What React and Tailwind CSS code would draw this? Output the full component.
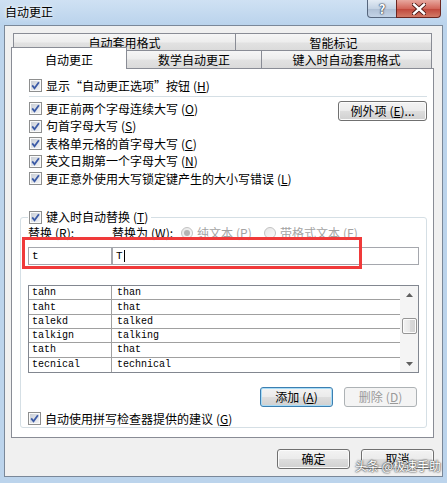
const ui = "font-['Noto_Sans_CJK_SC',sans-serif]";
const mono = "font-['Liberation_Mono',monospace]";
const tabBg = 'bg-[linear-gradient(to_bottom,#f6f6f6,#ededed_48%,#e2e2e2_52%,#dadada)]';
const btnBg = 'bg-[linear-gradient(to_bottom,#f3f3f3,#ebebeb_48%,#dddddd_52%,#d0d0d0)]';

const rows = [
  ['tahn', 'than'],
  ['taht', 'that'],
  ['talekd', 'talked'],
  ['talkign', 'talking'],
  ['tath', 'that'],
  ['tecnical', 'technical'],
];

function Check() {
  return (
    <span className="flex h-[13px] w-[13px] shrink-0 items-center justify-center border border-[#8e8f8f] bg-[#f4f4f4]">
      <span className="flex h-[11px] w-[11px] items-center justify-center border border-[#fafafa] bg-[linear-gradient(135deg,#c9ced6,#f3f4f6)]">
        <svg width="9" height="9" viewBox="0 0 9 9">
          <path d="M1.2 4.4 3.5 7.2 7.9 1.2" fill="none" stroke="#3b5aa6" strokeWidth="1.8" />
        </svg>
      </span>
    </span>
  );
}

function Radio({ on }) {
  return (
    <span className="flex h-[12px] w-[12px] shrink-0 items-center justify-center rounded-full border border-[#c2c2c2] bg-[linear-gradient(135deg,#e6e6e6,#fafafa)]">
      {on && <span className="h-[6px] w-[6px] rounded-full bg-[#b4b4b4]" />}
    </span>
  );
}

function Key({ k }) {
  return (
    <span className="ml-[3px]">
      (<span className="underline underline-offset-1">{k}</span>)
    </span>
  );
}

function CheckRow({ label, k }) {
  return (
    <div className="flex h-[17.5px] items-center gap-[4px]">
      <Check />
      <span className="whitespace-nowrap leading-[14px]">
        {label}
        <Key k={k} />
      </span>
    </div>
  );
}

function Btn({ children, kind = 'normal', className = '' }) {
  const look = {
    normal: `border-[#707070] ${btnBg} shadow-[inset_0_0_0_1px_#fbfbfb] text-black`,
    focus: `border-[#3c7fb1] ${btnBg} shadow-[inset_0_0_0_1px_#a8dcf7] text-black`,
    off: 'border-[#adb2b5] bg-[#f4f4f4] text-[#9a9a9a]',
  }[kind];
  return (
    <div className={`flex items-center justify-center rounded-[3px] border leading-[14px] ${look} ${className}`}>
      {children}
    </div>
  );
}

function Tab({ children, className = '' }) {
  return (
    <div className={`flex items-center justify-center border border-b-0 border-[#898c95] ${tabBg} leading-[14px] ${className}`}>
      {children}
    </div>
  );
}

export default function App() {
  return (
    <div className={`relative flex h-[483px] w-[447px] flex-col overflow-hidden bg-[#bcd4ec] text-[12px] text-black ${ui}`}>
      {/* title bar */}
      <div className="flex h-[25px] items-start justify-between bg-[linear-gradient(to_bottom,#cfe1f3,#bad3ec)]">
        <span className="pl-[5px] pt-[5px] leading-[14px] [text-shadow:0_0_6px_#ffffff,0_0_3px_#ffffff]">自动更正</span>
        <div className="mr-[6px] flex h-[18px]">
          <div className="flex w-[30px] items-center justify-center rounded-bl-[4px] border border-t-0 border-[#56667d] bg-[linear-gradient(to_bottom,#e3ebf4,#c4d3e4_50%,#aebfd4_52%,#c3d3e6)] text-[13px] font-bold leading-none text-white [text-shadow:0_0_1px_#2c3a4e,0_0_1px_#2c3a4e,0_0_2px_#2c3a4e]">
            ?
          </div>
          <div className="-ml-px flex w-[45px] items-center justify-center rounded-br-[4px] border border-t-0 border-[#6b2620] bg-[linear-gradient(to_bottom,#e8a89f,#d2665a_50%,#c0463a_52%,#d27a66)]">
            <svg width="14" height="12" viewBox="0 0 14 12">
              <path d="M2 1.5 12 10.5M12 1.5 2 10.5" stroke="#4a1612" strokeWidth="4.2" strokeLinecap="square" />
              <path d="M2 1.5 12 10.5M12 1.5 2 10.5" stroke="#ffffff" strokeWidth="2.4" strokeLinecap="square" />
            </svg>
          </div>
        </div>
      </div>

      {/* client area */}
      <div className="mx-[4px] mb-[6px] flex flex-1 flex-col border border-[#7a8899] bg-[#f0f0f0] pl-[6px] pr-[8px] pt-[7px]">
        {/* tabs */}
        <div className="mx-[2px] flex h-[18px]">
          <Tab className="w-[223px]">自动套用格式</Tab>
          <Tab className="-ml-px flex-1">智能标记</Tab>
        </div>
        <div className="-mt-px flex h-[18px] items-end">
          <div className="relative z-10 -mb-px flex h-[22px] w-[116px] items-center justify-center border border-b-0 border-[#898c95] bg-white pt-[3px] leading-[14px]">
            自动更正
          </div>
          <Tab className="-ml-px h-[18px] w-[136px]">数学自动更正</Tab>
          <Tab className="-ml-px mr-[2px] h-[18px] flex-1">键入时自动套用格式</Tab>
        </div>

        {/* panel */}
        <div className="flex flex-col border border-[#898c95] bg-white pb-[9px] pt-[8px]">
          <div className="ml-[17px] mr-[6px]">
            <div className="flex h-[17px] items-center gap-[4px]">
              <Check />
              <span className="leading-[14px]">
                显示“自动更正选项”按钮
                <Key k="H" />
              </span>
            </div>
            <div className="mt-[2px] h-px bg-[#d5dfe5]" />
            <div className="mt-[3px] flex justify-between">
              <div className="flex flex-col">
                <CheckRow label="更正前两个字母连续大写" k="O" />
                <CheckRow label="句首字母大写" k="S" />
                <CheckRow label="表格单元格的首字母大写" k="C" />
                <CheckRow label="英文日期第一个字母大写" k="N" />
                <CheckRow label="更正意外使用大写锁定键产生的大小写错误" k="L" />
              </div>
              <Btn className="mt-[1px] h-[20px] w-[89px]">
                例外项<Key k="E" />...
              </Btn>
            </div>
          </div>

          <fieldset className="ml-[8px] mr-[6px] mt-[21px] rounded-[3px] border border-[#d5dfe5] px-[7px]">
            <legend className="pl-[1px] pr-[3px]">
              <div className="flex h-[17px] items-center gap-[4px]">
                <Check />
                <span className="leading-[14px]">
                  键入时自动替换
                  <Key k="T" />
                </span>
              </div>
            </legend>

            <div className="flex h-[14px] items-center leading-[14px]">
              <span className="w-[84px]">
                替换<Key k="R" />:
              </span>
              <span className="w-[69px]">
                替换为<Key k="W" />:
              </span>
              <div className="flex w-[83px] items-center gap-[4px] text-[#a3a3a3]">
                <Radio on />
                <span>
                  纯文本<Key k="P" />
                </span>
              </div>
              <div className="flex items-center gap-[4px] text-[#a3a3a3]">
                <Radio />
                <span>
                  带格式文本<Key k="F" />
                </span>
              </div>
            </div>

            <div className={`mt-[7.5px] flex h-[18px] text-[11px] ${mono}`}>
              <div className="flex w-[84px] items-center border border-[#a5a7ad] pl-[3px]">t</div>
              <div className="flex flex-1 items-center border border-[#a5a7ad] pl-[3px]">
                T<span className="ml-px h-[12px] w-px bg-black" />
              </div>
            </div>

            <div className={`mt-[20px] flex h-[88px] border border-[#828790] text-[10px] ${mono}`}>
              <div className="flex flex-1 flex-col">
                {rows.map(([a, b], i) => (
                  <div
                    key={a}
                    className={`flex h-[14.33px] items-center ${i < rows.length - 1 ? 'border-b border-[#a0a0a0]' : ''}`}
                  >
                    <span className="flex h-full w-[83px] items-center border-r border-[#a0a0a0] pl-[3px]">{a}</span>
                    <span className="pl-[5px]">{b}</span>
                  </div>
                ))}
              </div>
              <div className="flex w-[18px] flex-col items-center bg-[#f4f4f4]">
                <div className="flex h-[17px] items-center justify-center">
                  <svg width="7" height="4" viewBox="0 0 7 4">
                    <path d="M0 4 3.5 0 7 4Z" fill="#5f5f5f" />
                  </svg>
                </div>
                <div className="mt-[15px] h-[16px] w-[15px] rounded-[2px] border border-[#959595] bg-[linear-gradient(to_right,#f3f3f3,#e8e8e8_50%,#d9d9d9_52%,#d3d3d3)] shadow-[inset_0_0_0_1px_#fbfbfb]" />
                <div className="flex-1" />
                <div className="flex h-[17px] items-center justify-center">
                  <svg width="7" height="4" viewBox="0 0 7 4">
                    <path d="M0 0 3.5 4 7 0Z" fill="#5f5f5f" />
                  </svg>
                </div>
              </div>
            </div>

            <div className="mt-[14px] flex justify-end gap-[11px] pr-[2px]">
              <Btn kind="focus" className="h-[20px] w-[73px]">
                添加<Key k="A" />
              </Btn>
              <Btn kind="off" className="h-[20px] w-[73px]">
                删除<Key k="D" />
              </Btn>
            </div>

            <div className="mt-[3px] flex h-[17px] items-center gap-[4px]">
              <Check />
              <span className="leading-[14px]">
                自动使用拼写检查器提供的建议
                <Key k="G" />
              </span>
            </div>
          </fieldset>
        </div>

        {/* dialog buttons */}
        <div className="mt-[11px] flex justify-end gap-[11px]">
          <Btn className="h-[20px] w-[73px]">确定</Btn>
          <Btn className="h-[20px] w-[73px]">取消</Btn>
        </div>
      </div>

      {/* annotation + watermark */}
      <div className="pointer-events-none absolute left-[22px] top-[237px] h-[32px] w-[340px] border-[3px] border-[#f03a3a]" />
      <div className="pointer-events-none absolute left-[355px] top-[458px] whitespace-nowrap text-[12px] leading-[15px] text-white [text-shadow:0_0_1px_#555,0_0_2px_#555,0_0_2px_#777]">
        头条 @极速手助
      </div>
    </div>
  );
}
